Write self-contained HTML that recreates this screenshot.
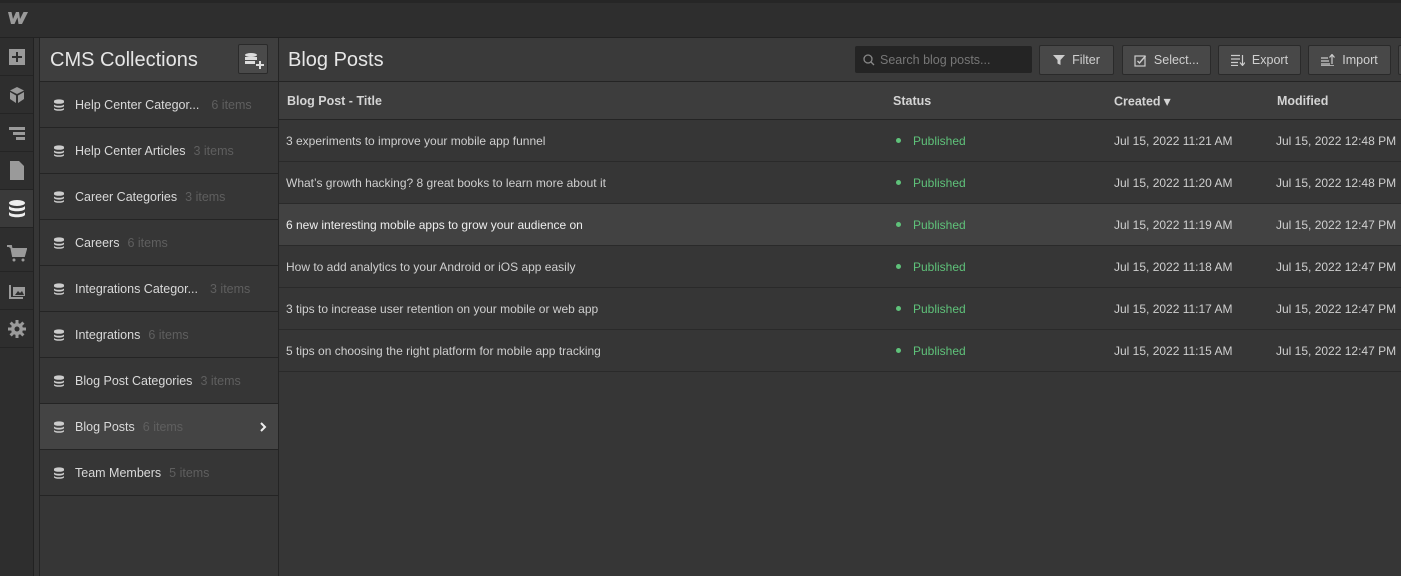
<!DOCTYPE html>
<html><head><style>
*{box-sizing:border-box;margin:0;padding:0}
body{width:1401px;height:576px;overflow:hidden;background:#363636;font-family:"Liberation Sans",sans-serif;color:#d9d9d9;position:relative;font-size:12px}
.abs{position:absolute}
#top{left:0;top:0;width:1401px;height:38px;background:#2e2e2e;border-top:3px solid #262626;border-bottom:1px solid #222}
#rail{left:0;top:38px;width:34px;height:538px;background:#2e2e2e;border-right:1px solid #222}
.ri{position:absolute;left:0;width:33px;height:38px;border-bottom:1px solid #242424;display:flex;align-items:center;justify-content:center}
#side{left:39px;top:38px;width:240px;height:538px;background:#363636;border-left:1px solid #242424;border-right:1px solid #242424}
#sh{height:44px;background:#3e3e3e;border-bottom:1px solid #242424;position:relative}
#sh span{position:absolute;left:10px;top:11px;font-size:20px;color:#e6e6e6}
#addb{position:absolute;left:198px;top:6px;width:30px;height:30px;background:#4a4a4a;border:1px solid #2a2a2a;border-radius:2px}
.it{height:46px;border-bottom:1px solid #242424;position:relative;display:flex;align-items:center;padding-left:14px;font-size:12.5px;color:#d9d9d9}
.it .n{color:#5f5f5f;margin-left:8px}
.it.sel{background:#444}
.db{width:10px;height:12px;margin-right:11px}
#main{left:279px;top:38px;width:1122px;height:538px}
#mh{height:44px;background:#3a3a3a;border-bottom:1px solid #242424;position:relative}
#mh .t{position:absolute;left:9px;top:11px;font-size:20px;color:#e6e6e6}
.btn{position:absolute;top:7px;height:30px;background:#484848;border:1px solid #2a2a2a;border-radius:2px;color:#d0d0d0;font-size:12.5px;display:flex;align-items:center;justify-content:center;gap:7px}
#search{position:absolute;left:576px;top:8px;width:177px;height:27px;background:#242424;border-radius:2px;color:#777;font-size:12.5px;display:flex;align-items:center;padding-left:8px;gap:5px}
#th{height:38px;background:#3d3d3d;border-bottom:1px solid #242424;position:relative;font-weight:bold;font-size:12.5px;color:#d4d4d4}
.row{height:42px;border-bottom:1px solid #2a2a2a;position:relative;font-size:12px;color:#cfcfcf}
.row.hl{background:#424242}
.c{position:absolute;top:50%;transform:translateY(-50%);white-space:nowrap}
.st{color:#5fc27a}
.st:before{content:"";display:inline-block;width:5px;height:5px;border-radius:50%;background:#5fc27a;margin-right:12px;vertical-align:middle;position:relative;top:-1px}
</style></head><body>
<svg width="0" height="0" style="position:absolute"><defs><symbol id="db" viewBox="0 0 10 12"><path d="M0 2a5 1.6 0 0 1 10 0v1.2a5 1.6 0 0 1-10 0Z M0 5.2a5 1.6 0 0 0 10 0v1.8a5 1.6 0 0 1-10 0Z M0 8.7a5 1.6 0 0 0 10 0v1.5a5 1.6 0 0 1-10 0Z" fill="#ccc"/></symbol></defs></svg>
<div id="top" class="abs"><svg style="position:absolute;left:8px;top:8px" width="20" height="14" viewBox="0 0 20 14"><path d="M0 1h3.5l1.5 7 3-7h3l1 7 3.5-7H20l-6 12h-3.5l-1-6.5L6.5 13H3Z" fill="#9a9a9a"/></svg></div>
<div id="rail" class="abs">
<div class="ri" style="top:0"><div style="width:16px;height:16px;background:#9a9a9a;position:relative"><div style="position:absolute;left:7px;top:3px;width:2px;height:10px;background:#2e2e2e"></div><div style="position:absolute;left:3px;top:7px;width:10px;height:2px;background:#2e2e2e"></div></div></div>
<div class="ri" style="top:38px"><svg width="16" height="18" viewBox="0 0 16 18"><path d="M8 1L15 4.5 8 8 1 4.5Z M1 6v7l6 4V9.5Z M15 6v7l-6 4V9.5Z" fill="#9a9a9a"/></svg></div>
<div class="ri" style="top:76px"><svg width="18" height="16"><rect x="1" y="2" width="16" height="3" fill="#9a9a9a"/><rect x="5" y="7" width="12" height="3" fill="#9a9a9a"/><rect x="8" y="12" width="9" height="3" fill="#9a9a9a"/></svg></div>
<div class="ri" style="top:114px"><svg width="16" height="19"><path d="M1 0h9l5 5v14H1Z" fill="#9a9a9a"/></svg></div>
<div class="ri" style="top:152px;background:#3a3a3a"><svg width="18" height="20" viewBox="0 0 18 20"><ellipse cx="9" cy="4" rx="8" ry="3" fill="#eee"/><path d="M1 7c2 3 14 3 16 0v3c-2 3-14 3-16 0Z M1 13c2 3 14 3 16 0v3c-2 3-14 3-16 0Z" fill="#eee"/></svg></div>
<div class="ri" style="top:196px"><svg width="20" height="18"><path d="M0 2h4l2 10h11l2-7H5" stroke="#9a9a9a" stroke-width="2" fill="#9a9a9a"/><circle cx="7" cy="16" r="1.5" fill="#9a9a9a"/><circle cx="16" cy="16" r="1.5" fill="#9a9a9a"/></svg></div>
<div class="ri" style="top:234px"><svg width="18" height="18"><path d="M1 3h2v12h12v2H1Z" fill="#9a9a9a"/><rect x="5" y="5" width="12" height="9" fill="#9a9a9a"/><path d="M7 13l3-4 2 2 2-2 2 4Z" fill="#2e2e2e"/></svg></div>
<div class="ri" style="top:272px"><svg width="18" height="18" viewBox="0 0 18 18"><circle cx="9" cy="9" r="6" fill="#9a9a9a"/><g stroke="#9a9a9a" stroke-width="3"><path d="M9 0v18M0 9h18M2.6 2.6l12.8 12.8M15.4 2.6L2.6 15.4"/></g><circle cx="9" cy="9" r="2.5" fill="#2e2e2e"/></svg></div>
</div>
<div id="side" class="abs">
<div id="sh"><span>CMS Collections</span><div id="addb"><svg width="30" height="30"><ellipse cx="12" cy="10" rx="6" ry="2" fill="#ddd"/><rect x="6" y="12" width="12" height="3" fill="#ddd"/><rect x="6" y="16" width="10" height="3" fill="#ddd"/><path d="M17 20h8M21 16v8" stroke="#ddd" stroke-width="2"/></svg></div></div>
<div class="it"><svg class="db"><use href="#db"/></svg>Help Center Categor...<span class="n" style="margin-left:12px">6 items</span></div>
<div class="it"><svg class="db"><use href="#db"/></svg>Help Center Articles<span class="n">3 items</span></div>
<div class="it"><svg class="db"><use href="#db"/></svg>Career Categories<span class="n">3 items</span></div>
<div class="it"><svg class="db"><use href="#db"/></svg>Careers<span class="n">6 items</span></div>
<div class="it"><svg class="db"><use href="#db"/></svg>Integrations Categor...<span class="n" style="margin-left:12px">3 items</span></div>
<div class="it"><svg class="db"><use href="#db"/></svg>Integrations<span class="n">6 items</span></div>
<div class="it"><svg class="db"><use href="#db"/></svg>Blog Post Categories<span class="n">3 items</span></div>
<div class="it sel"><svg class="db"><use href="#db"/></svg>Blog Posts<span class="n">6 items</span><svg style="position:absolute;left:219px;top:18px" width="8" height="10"><path d="M2 1l4 4-4 4" stroke="#eee" stroke-width="2" fill="none"/></svg></div>
<div class="it"><svg class="db"><use href="#db"/></svg>Team Members<span class="n">5 items</span></div>
</div>
<div id="main" class="abs">
<div id="mh"><span class="t">Blog Posts</span>
<div id="search"><svg width="12" height="12"><circle cx="5" cy="5" r="4" stroke="#888" stroke-width="1.3" fill="none"/><path d="M8 8l3 3" stroke="#888" stroke-width="1.3"/></svg>Search blog posts...</div>
<div class="btn" style="left:760px;width:75px"><svg width="12" height="12"><path d="M0 1h12L7.5 6v5l-3-1.5V6Z" fill="#ccc"/></svg>Filter</div>
<div class="btn" style="left:843px;width:89px"><svg width="13" height="13"><rect x="1" y="2" width="10" height="10" stroke="#ccc" fill="none" stroke-width="1.2"/><path d="M3.5 7l2 2 6-7" stroke="#ccc" stroke-width="1.4" fill="none"/></svg>Select...</div>
<div class="btn" style="left:939px;width:83px"><svg width="14" height="12"><path d="M0 1.5h9M0 5h9M0 8.5h7M0 11.5h7M11.5 1v10M9 8.5l2.5 3 2.5-3" stroke="#ccc" stroke-width="1.2" fill="none"/></svg>Export</div>
<div class="btn" style="left:1029px;width:83px"><svg width="14" height="12"><path d="M0 4h7M0 7h8M0 10h9M0 11.8h13M11 1v9M8.5 3.5L11 0.5l2.5 3" stroke="#ccc" stroke-width="1.2" fill="none"/></svg>Import</div>
<div class="btn" style="left:1119px;width:20px"></div>
</div>
<div id="th"><span class="c" style="left:8px">Blog Post - Title</span><span class="c" style="left:614px">Status</span><span class="c" style="left:835px">Created ▾</span><span class="c" style="left:998px">Modified</span></div>
<div class="row"><span class="c" style="left:7px">3 experiments to improve your mobile app funnel</span><span class="c st" style="left:617px">Published</span><span class="c" style="left:835px">Jul 15, 2022 11:21 AM</span><span class="c" style="left:997px">Jul 15, 2022 12:48 PM</span></div>
<div class="row"><span class="c" style="left:7px">What’s growth hacking? 8 great books to learn more about it</span><span class="c st" style="left:617px">Published</span><span class="c" style="left:835px">Jul 15, 2022 11:20 AM</span><span class="c" style="left:997px">Jul 15, 2022 12:48 PM</span></div>
<div class="row hl"><span class="c" style="left:7px;color:#eee">6 new interesting mobile apps to grow your audience on</span><span class="c st" style="left:617px">Published</span><span class="c" style="left:835px">Jul 15, 2022 11:19 AM</span><span class="c" style="left:997px">Jul 15, 2022 12:47 PM</span></div>
<div class="row"><span class="c" style="left:7px">How to add analytics to your Android or iOS app easily</span><span class="c st" style="left:617px">Published</span><span class="c" style="left:835px">Jul 15, 2022 11:18 AM</span><span class="c" style="left:997px">Jul 15, 2022 12:47 PM</span></div>
<div class="row"><span class="c" style="left:7px">3 tips to increase user retention on your mobile or web app</span><span class="c st" style="left:617px">Published</span><span class="c" style="left:835px">Jul 15, 2022 11:17 AM</span><span class="c" style="left:997px">Jul 15, 2022 12:47 PM</span></div>
<div class="row"><span class="c" style="left:7px">5 tips on choosing the right platform for mobile app tracking</span><span class="c st" style="left:617px">Published</span><span class="c" style="left:835px">Jul 15, 2022 11:15 AM</span><span class="c" style="left:997px">Jul 15, 2022 12:47 PM</span></div>
</div>
</body></html>
